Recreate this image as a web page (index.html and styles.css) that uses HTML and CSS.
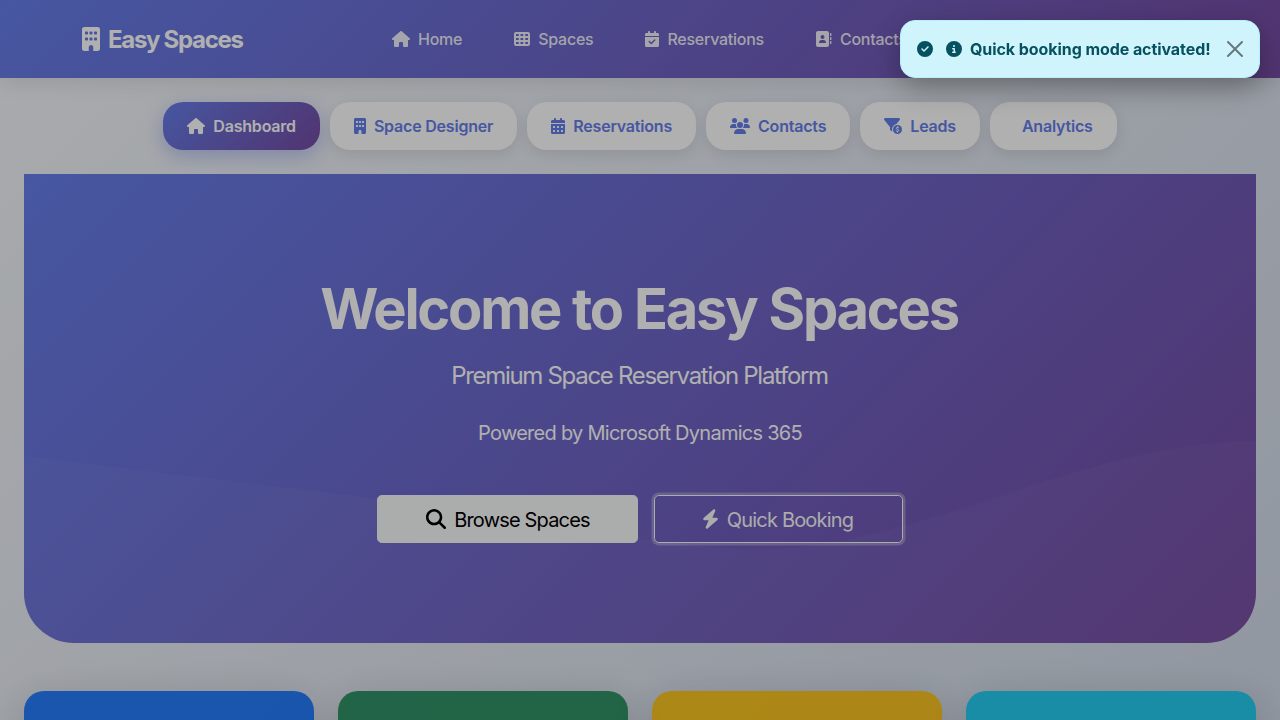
FILE: index.html
```html
<!DOCTYPE html>
<html lang="en">
<head>
<meta charset="utf-8">
<title>Easy Spaces</title>
<link rel="stylesheet" href="styles.css">
</head>
<body>
<svg class="sprite" width="0" height="0" aria-hidden="true">
  <symbol id="house" viewBox="0 0 576 512"><path d="M575.8 255.5c0 18-15 32.1-32 32.1h-32l.7 160.2c0 2.7-.2 5.4-.5 8.1V472c0 22.1-17.9 40-40 40H392c-22.1 0-40-17.9-40-40V384c0-17.700-14.300-32-32-32H256c-17.700 0-32 14.300-32 32v88c0 22.100-17.900 40-40 40H104c-22.100 0-40-17.900-40-40V287.600H32c-18 0-32-14-32-32.100c0-9 3-17 10-24L266.400 8c7-7 15-8 22-8s15 2 21 7L564.800 231.500c8 7 12 15 11 24z"/></symbol>
  <symbol id="building" viewBox="0 0 384 512"><path d="M48 0C21.500 0 0 21.500 0 48V464c0 26.500 21.500 48 48 48h96V432c0-26.500 21.500-48 48-48s48 21.500 48 48v80h96c26.500 0 48-21.500 48-48V48c0-26.500-21.500-48-48-48H48zM80 96h32q16 0 16 16v32q0 16-16 16H80q-16 0-16-16v-32q0-16 16-16zM176 96h32q16 0 16 16v32q0 16-16 16h-32q-16 0-16-16v-32q0-16 16-16zM272 96h32q16 0 16 16v32q0 16-16 16h-32q-16 0-16-16v-32q0-16 16-16zM80 224h32q16 0 16 16v32q0 16-16 16H80q-16 0-16-16v-32q0-16 16-16zM176 224h32q16 0 16 16v32q0 16-16 16h-32q-16 0-16-16v-32q0-16 16-16zM272 224h32q16 0 16 16v32q0 16-16 16h-32q-16 0-16-16v-32q0-16 16-16z" fill-rule="evenodd"/></symbol>
  <symbol id="cells" viewBox="0 0 512 512"><path fill-rule="evenodd" d="M64 32C28.700 32 0 60.700 0 96V416c0 35.300 28.700 64 64 64H448c35.300 0 64-28.700 64-64V96c0-35.300-28.700-64-64-64H64zm88 64v64H64V96h88zm56 0h88v64H208V96zm240 0v64H360V96h88zM64 224h88v64H64V224zm232 0v64H208V224h88zm64 0h88v64H360V224zM152 352v64H64V352h88zm56 0h88v64H208V352zm240 0v64H360V352h88z"/></symbol>
  <symbol id="calendar-check" viewBox="0 0 448 512"><path fill-rule="evenodd" d="M128 0c17.700 0 32 14.300 32 32V64H288V32c0-17.700 14.300-32 32-32s32 14.300 32 32V64h48c26.500 0 48 21.500 48 48v48H0V112C0 85.500 21.500 64 48 64H96V32c0-17.700 14.300-32 32-32zM0 192H448V464c0 26.500-21.500 48-48 48H48c-26.500 0-48-21.500-48-48V192zM329 305c9.400-9.400 9.400-24.600 0-33.900s-24.600-9.400-33.900 0l-95 95-47-47c-9.400-9.400-24.600-9.400-33.900 0s-9.400 24.600 0 33.900l64 64c9.400 9.400 24.600 9.400 33.900 0L329 305z"/></symbol>
  <symbol id="calendar-days" viewBox="0 0 448 512"><path fill-rule="evenodd" d="M128 0c17.700 0 32 14.300 32 32V64H288V32c0-17.700 14.300-32 32-32s32 14.300 32 32V64h48c26.500 0 48 21.500 48 48v48H0V112C0 85.500 21.500 64 48 64H96V32c0-17.700 14.300-32 32-32zM0 192H448V464c0 26.500-21.500 48-48 48H48c-26.500 0-48-21.500-48-48V192zM80 256h32q16 0 16 16v32q0 16-16 16H80q-16 0-16-16v-32q0-16 16-16zM208 256h32q16 0 16 16v32q0 16-16 16h-32q-16 0-16-16v-32q0-16 16-16zM336 256h32q16 0 16 16v32q0 16-16 16h-32q-16 0-16-16v-32q0-16 16-16zM80 384h32q16 0 16 16v32q0 16-16 16H80q-16 0-16-16v-32q0-16 16-16zM208 384h32q16 0 16 16v32q0 16-16 16h-32q-16 0-16-16v-32q0-16 16-16zM336 384h32q16 0 16 16v32q0 16-16 16h-32q-16 0-16-16v-32q0-16 16-16z"/></symbol>
  <symbol id="address-book" viewBox="0 0 512 512"><path fill-rule="evenodd" d="M64 0C28.700 0 0 28.700 0 64V448c0 35.300 28.700 64 64 64H352c35.300 0 64-28.700 64-64V64c0-35.300-28.700-64-64-64H64zM176 288h64c44.200 0 80 35.800 80 80c0 8.800-7.200 16-16 16H112c-8.800 0-16-7.200-16-16c0-44.200 35.800-80 80-80zm-32-96a64 64 0 1 1 128 0 64 64 0 1 1 -128 0z"/><rect x="448" y="64" width="44" height="96" rx="16"/><rect x="448" y="192" width="44" height="96" rx="16"/><rect x="448" y="320" width="44" height="96" rx="16"/></symbol>
  <symbol id="users" viewBox="0 0 640 512"><path d="M144 0a80 80 0 1 1 0 160A80 80 0 1 1 144 0zM512 0a80 80 0 1 1 0 160A80 80 0 1 1 512 0zM0 298.700C0 239.800 47.800 192 106.700 192h42.700c15.900 0 31 3.500 44.600 9.700c-1.300 7.200-1.900 14.700-1.900 22.300c0 38.200 16.800 72.500 43.300 96H21.300C9.600 320 0 310.400 0 298.700zM404.600 320c26.600-23.500 43.300-57.800 43.300-96c0-7.600-.7-15-1.900-22.300c13.600-6.300 28.700-9.700 44.600-9.700h42.700C592.200 192 640 239.800 640 298.700c0 11.800-9.600 21.300-21.300 21.300H404.600zM224 224a96 96 0 1 1 192 0 96 96 0 1 1 -192 0zM128 485.300C128 411.700 187.700 352 261.300 352H378.700C452.300 352 512 411.700 512 485.300c0 14.700-11.900 26.700-26.700 26.700H154.700c-14.700 0-26.700-11.900-26.700-26.700z"/></symbol>
  <symbol id="funnel" viewBox="0 0 576 512"><path d="M3.900 22.900C10.500 8.900 24.500 0 40 0H472c15.500 0 29.500 8.900 36.100 22.900s4.600 30.500-5.200 42.500L396.400 195.600C316.200 212.100 256 283 256 368c0 27.400 6.300 53.400 17.500 76.500c-1.600-.8-3.200-1.800-4.700-2.900l-64-48c-8.100-6-12.800-15.500-12.800-25.600V288.900L9 65.300C-.7 53.400-2.800 36.800 3.900 22.900z"/><circle cx="432" cy="368" r="144"/><path class="coin" d="M432 278v22m0 136v22m38-146c-18-9-76-20-76 18 0 40 78 26 78 66 0 38-58 32-82 18"/></symbol>
  <symbol id="search" viewBox="0 0 512 512"><path fill-rule="evenodd" d="M416 208c0 45.900-14.900 88.300-40 122.700L502.600 457.400c12.500 12.500 12.500 32.800 0 45.300s-32.800 12.500-45.300 0L330.700 376c-34.400 25.200-76.800 40-122.700 40C93.100 416 0 322.900 0 208S93.100 0 208 0S416 93.100 416 208zM208 352a144 144 0 1 0 0-288 144 144 0 1 0 0 288z"/></symbol>
  <symbol id="bolt" viewBox="0 0 448 512"><path d="M349.400 44.600c5.900-13.700 1.500-29.700-10.600-38.500s-28.600-8-39.900 1.800l-256 224c-10 8.800-13.600 22.900-8.900 35.300S50.700 288 64 288H175.500L98.600 467.400c-5.900 13.700-1.500 29.700 10.600 38.500s28.600 8 39.900-1.800l256-224c10-8.800 13.600-22.900 8.900-35.300s-16.600-20.700-30-20.700H272.500L349.400 44.600z"/></symbol>
  <symbol id="check" viewBox="0 0 512 512"><path d="M256 512A256 256 0 1 0 256 0a256 256 0 1 0 0 512zM369 209L241 337c-9.400 9.400-24.600 9.400-33.900 0l-64-64c-9.400-9.400-9.400-24.600 0-33.900s24.600-9.400 33.900 0l47 47L335 175c9.400-9.400 24.600-9.400 33.900 0s9.400 24.600 0 33.900z" fill-rule="evenodd"/></symbol>
  <symbol id="info" viewBox="0 0 512 512"><path fill-rule="evenodd" d="M256 512A256 256 0 1 0 256 0a256 256 0 1 0 0 512zM216 336h24V272H216c-13.300 0-24-10.700-24-24s10.700-24 24-24h48c13.300 0 24 10.700 24 24v88h8c13.300 0 24 10.700 24 24s-10.700 24-24 24H216c-13.300 0-24-10.700-24-24s10.700-24 24-24zm40-208a32 32 0 1 1 0 64 32 32 0 1 1 0-64z"/></symbol>
  <symbol id="close" viewBox="0 0 16 16"><path d="M.293.293a1 1 0 0 1 1.414 0L8 6.586 14.293.293a1 1 0 1 1 1.414 1.414L9.414 8l6.293 6.293a1 1 0 0 1-1.414 1.414L8 9.414l-6.293 6.293a1 1 0 0 1-1.414-1.414L6.586 8 .293 1.707a1 1 0 0 1 0-1.414z"/></symbol>
</svg>
<div class="page">
  <header class="navbar">
    <a class="brand"><svg class="i-brand"><use href="#building"/></svg><span class="brand-name">Easy Spaces</span></a>
    <nav class="nav">
      <a><svg class="w18"><use href="#house"/></svg>Home</a>
      <a><svg class="w16"><use href="#cells"/></svg>Spaces</a>
      <a><svg class="w14"><use href="#calendar-check"/></svg>Reservations</a>
      <a><svg class="w16"><use href="#address-book"/></svg>Contacts</a>
    </nav>
  </header>
  <main class="content">
    <div class="tabs">
      <a class="tab active"><svg class="w18"><use href="#house"/></svg>Dashboard</a>
      <a class="tab"><svg class="w12"><use href="#building"/></svg>Space Designer</a>
      <a class="tab"><svg class="w14"><use href="#calendar-days"/></svg>Reservations</a>
      <a class="tab"><svg class="w20"><use href="#users"/></svg>Contacts</a>
      <a class="tab"><svg class="w18"><use href="#funnel"/></svg>Leads</a>
      <a class="tab"><span class="no-icon"></span>Analytics</a>
    </div>
    <section class="hero">
      <svg class="wave" viewBox="0 0 1232 469"><path d="M0 282L347 324C476 341 636 375 736 375C896 375 1056 268 1232 267V469H0Z"/></svg>
      <div class="hero-body">
        <h1>Welcome to Easy Spaces</h1>
        <p class="lead">Premium Space Reservation Platform</p>
        <p class="powered">Powered by Microsoft Dynamics 365</p>
        <div class="actions">
          <a class="btn light"><svg class="b20"><use href="#search"/></svg><span>Browse Spaces</span></a>
          <a class="btn outline"><svg class="b17"><use href="#bolt"/></svg><span>Quick Booking</span></a>
        </div>
      </div>
    </section>
    <section class="cards">
      <div class="card blue"></div><div class="card green"></div><div class="card yellow"></div><div class="card cyan"></div>
    </section>
  </main>
</div>
<div class="backdrop"></div>
<div class="toast">
  <svg class="w16 t-check"><use href="#check"/></svg>
  <svg class="w16"><use href="#info"/></svg>
  <strong>Quick booking mode activated!</strong>
  <svg class="t-close"><use href="#close"/></svg>
</div>
</body>
</html>
```

FILE: styles.css
```css
* { box-sizing: border-box; }
body { margin: 0; font-family: Inter, "Liberation Sans", sans-serif; font-size: 16px; line-height: 1.5; }
h1, p { margin: 0; }
svg { fill: currentColor; flex: none; }
.sprite { position: absolute; }
.page { height: 720px; overflow: hidden; background: linear-gradient(135deg, #f5f7fa 0%, #c3cfe2 100%) 0 0 / 100% 1600px; }

.navbar { position: relative; height: 78px; padding-left: 82px; display: flex; align-items: center; color: #fff; background: linear-gradient(135deg, #667eea 0%, #764ba2 100%); box-shadow: 0 4px 20px rgba(0,0,0,.1); }
.brand { width: 310px; display: flex; align-items: center; gap: 8px; font-size: 24px; font-weight: 700; letter-spacing: -1.300px; }
.brand-name { padding-top: 2px; }
.i-brand { width: 18px; height: 24px; }
.nav { display: flex; gap: 52px; }
.nav a { display: flex; align-items: center; gap: 8px; font-weight: 500; letter-spacing: -.25px; color: rgba(255,255,255,.9); }
.w12 { width: 12px; height: 16px; }
.w14 { width: 14px; height: 16px; }
.w16 { width: 16px; height: 16px; }
.w18 { width: 18px; height: 16px; }
.w20 { width: 20px; height: 16px; }

.content { padding: 24px; }
.tabs { display: flex; justify-content: center; gap: 10px; }
.tab { display: flex; align-items: center; gap: 8px; height: 48px; padding: 0 24px; border-radius: 20px; background: #fff; color: #667eea; font-weight: 600; letter-spacing: -.2px; box-shadow: 0 4px 15px rgba(0,0,0,.1); }
.tab.active { color: #fff; background: linear-gradient(135deg, #667eea 0%, #764ba2 100%); box-shadow: 0 6px 20px rgba(102,126,234,.4); }
.no-icon { width: 0; }
.coin { fill: none; stroke: #fff; stroke-width: 32; stroke-linecap: round; }

.hero { position: relative; height: 469px; margin-top: 24px; padding-top: 102px; border-radius: 0 0 50px 50px; overflow: hidden; color: #fff; text-align: center; background: linear-gradient(135deg, #667eea 0%, #764ba2 100%); }
.wave { position: absolute; inset: 0; width: 100%; height: 100%; fill: rgba(255,255,255,.03); }
.hero-body { position: relative; }
h1 { font-size: 56px; line-height: 67px; font-weight: 750; letter-spacing: -2.250px; word-spacing: 1px; text-indent: -2px; }
.lead { margin-top: 15px; font-size: 24px; line-height: 36px; font-weight: 370; letter-spacing: -1.300px; text-indent: -1px; }
.powered { margin-top: 24px; font-size: 20px; line-height: 30px; letter-spacing: -.73px; }
.actions { display: flex; justify-content: center; gap: 16px; margin-top: 47px; }
.btn { display: flex; align-items: center; justify-content: center; gap: 8px; height: 48px; border: 1px solid #f8f9fa; border-radius: 4.800px; font-size: 20px; letter-spacing: -.82px; }
.btn span { padding-top: 2px; }
.light { width: 261px; background: #f8f9fa; color: #000; padding-left: 1px; }
.outline { width: 249px; color: #f8f9fa; padding-right: 2px; box-shadow: 0 0 0 2.500px rgba(248,249,250,.3); }
.b20 { width: 20px; height: 20px; }
.b17 { width: 17px; height: 20px; }

.cards { display: grid; grid-template-columns: repeat(4, 1fr); gap: 24px; margin-top: 48px; }
.card { height: 160px; border-radius: 20px; opacity: .88; box-shadow: 0 10px 40px rgba(0,0,0,.2); }
.blue { background: #0d6efd; }
.green { background: #198754; }
.yellow { background: #ffc107; }
.cyan { background: #0dcaf0; }

.backdrop { position: fixed; inset: 0; background: rgba(0,0,0,.31); }
.toast { position: fixed; top: 20px; right: 20px; width: 360px; height: 58px; padding: 0 16px; display: flex; align-items: center; gap: 8px; border: 1px solid #b6effb; border-radius: 15px; background: #cff4fc; color: #055160; box-shadow: 0 10px 30px rgba(0,0,0,.3); }
.toast strong { font-weight: 700; letter-spacing: -.07px; white-space: nowrap; }
.t-check { margin-right: 5px; }
.t-close { width: 16px; height: 16px; margin-left: auto; color: #000; opacity: .5; }
```
